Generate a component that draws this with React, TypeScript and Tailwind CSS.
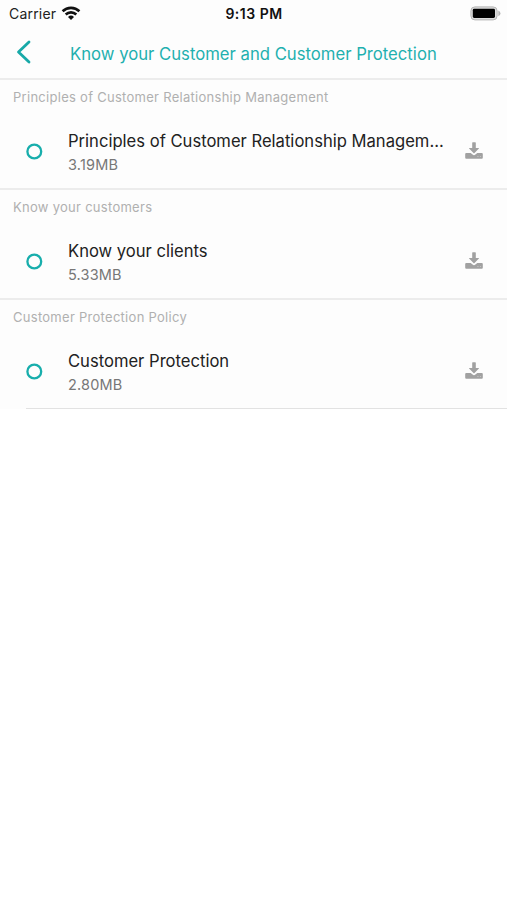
const sections = [
  { heading: 'Principles of Customer Relationship Management', title: 'Principles of Customer Relationship Managem...', size: '3.19MB' },
  { heading: 'Know your customers', title: 'Know your clients', size: '5.33MB' },
  { heading: 'Customer Protection Policy', title: 'Customer Protection', size: '2.80MB' },
];

function WifiIcon() {
  return (
    <svg className="mb-[2px] ml-[5px] h-[15px] w-5" viewBox="0 0 20 15" fill="none" stroke="#111" strokeWidth="2.6">
      <path d="M1.6 5.3a12 12 0 0 1 16.8 0" />
      <path d="M4.7 8.5a7.6 7.6 0 0 1 10.6 0" />
      <path d="M10 14l-3-3a4.3 4.3 0 0 1 6 0z" fill="#111" stroke="none" />
    </svg>
  );
}

function BatteryIcon() {
  return (
    <svg className="h-[15px] w-[31px]" viewBox="0 0 31 15">
      <rect x="0.9" y="0.9" width="26.2" height="13" rx="4" fill="#ddd" stroke="#b4b4b4" strokeWidth="1" />
      <rect x="2.8" y="2.8" width="22.2" height="9.2" rx="1.4" fill="#000" />
      <path d="M28.3 4.6q2.2 1 2.2 2.8t-2.2 2.8z" fill="#b4b4b4" />
    </svg>
  );
}

function DownloadIcon() {
  return (
    <svg className="h-[17px] w-[18px]" viewBox="0 0 18 17" fill="#a1a1a1">
      <path d="M7.200 .8q0-.6.6-.6h2.400q.6 0 .6.6v5.200h2.800q.8 0 .3.6L9.500 10.900q-.5.500-1 0L4.100 6.600q-.5-.6.3-.6h2.800z" />
      <path d="M1.200 10.900H5.700l1.900 1.700q1.400 1.100 2.800 0l1.900-1.700h4.500q1 0 1 1v3.800q0 1-1 1H1.200q-1 0-1-1v-3.800q0-1 1-1z" />
      <path d="M12.300 14.500h1.200M14.900 14.500h1.200" stroke="#c4c4c4" strokeWidth="0.900" />
    </svg>
  );
}

export default function App() {
  return (
    <div className="min-h-[900px] w-full bg-white font-['Inter',sans-serif] text-[#222]">
      <header className="flex h-20 flex-col border-b-2 border-[#ececec] bg-[#fdfdfd]">
        <div className="grid h-7 grid-cols-3 items-center pr-[6px] pl-[9px]">
          <div className="flex items-center text-[14px]/7 tracking-[0.2px]">
            <span>Carrier</span>
            <WifiIcon />
          </div>
          <div className="pr-[2px] text-center text-[14px]/7 font-semibold tracking-[0.5px] text-[#111]">9:13 PM</div>
          <div className="flex justify-end pb-px"><BatteryIcon /></div>
        </div>
        <div className="flex flex-1 items-center pl-4">
          <button aria-label="Back" className="w-[54px] pb-[3px]">
            <svg className="h-6 w-4" viewBox="0 0 16 24" fill="none" stroke="#18a9a8" strokeWidth="2.8" strokeLinecap="round" strokeLinejoin="round">
              <path d="M13 2L2.500 12L13 22" />
            </svg>
          </button>
          <h1 className="pt-[2px] text-[16.7px]/6 whitespace-nowrap text-[#1fb0af]">Know your Customer and Customer Protection</h1>
        </div>
      </header>
      <main>
        {sections.map((s, i) => (
          <section key={s.heading} className={i < 2 ? 'h-[110px] border-b-2 border-[#ececec] bg-[#fdfdfd]' : 'h-[109px] bg-[#fdfdfd]'}>
            <h2 className="h-[35px] pl-[13px] text-[13px]/[35px] tracking-[0.28px] whitespace-nowrap text-[#b0b0b0]">{s.heading}</h2>
            <div className={i < 2 ? 'ml-[26px] flex h-[73px] items-center' : 'ml-[26px] flex h-[74px] items-center border-b border-[#e2e2e2]'}>
              <svg className="h-[17px] w-[17px]" viewBox="0 0 17 17">
                <circle cx="8.300" cy="8.500" r="6.900" fill="none" stroke="#18aeac" strokeWidth="2.300" />
              </svg>
              <div className="mt-[2px] ml-[25px] min-w-0 flex-1 whitespace-nowrap">
                <div className="text-[16.6px]/6 text-[#222]">{s.title}</div>
                <div className="text-[14.5px]/6 tracking-[0.18px] text-[#777]">{s.size}</div>
              </div>
              <button aria-label="Download" className="mr-6 mb-[2px]"><DownloadIcon /></button>
            </div>
          </section>
        ))}
      </main>
    </div>
  );
}
